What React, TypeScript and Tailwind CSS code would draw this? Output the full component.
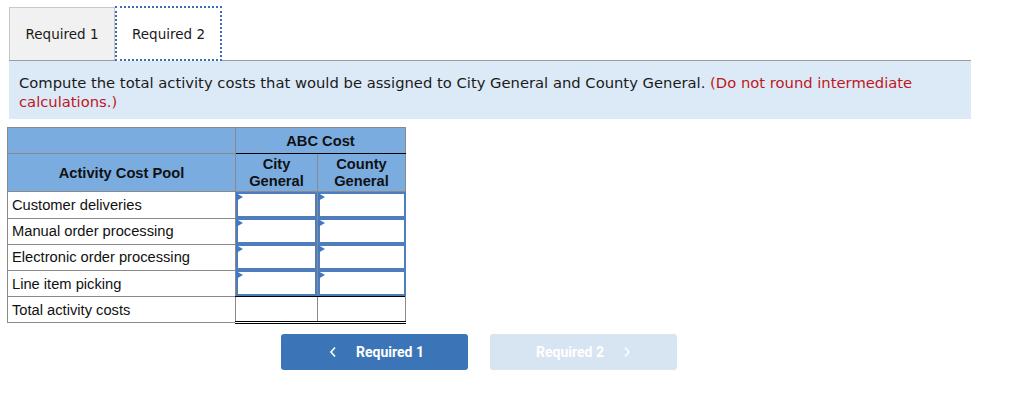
import React from "react";

const rows = [
  "Customer deliveries",
  "Manual order processing",
  "Electronic order processing",
  "Line item picking",
];

function InputCell() {
  return (
    <td className="p-0 border-l border-[#8a8a8a] h-[26px]">
      <div className="relative h-[26px] border-2 border-[#4d7dbd] bg-white">
        <div className="absolute left-[-2px] top-[-1px] w-0 h-0 border-t-[4px] border-b-[4px] border-l-[7px] border-t-transparent border-b-transparent border-l-[#3f78c4]" />
      </div>
    </td>
  );
}

export default function App() {
  return (
    <div className="w-[1024px] h-[407px] bg-white relative" style={{ fontFamily: "'DejaVu Sans', Verdana, sans-serif" }}>
      <div className="pt-[6px] pl-[9px] flex items-end">
        <div className="w-[106px] h-[53px] bg-[#f1f1f1] border border-[#c8c8c8] border-b-0 flex items-center justify-center text-[13.5px] text-[#1a1a1a] pt-[1px]">
          Required 1
        </div>
        <div className="w-[107px] h-[55px] bg-white border-2 border-dotted border-[#3a6fb8] flex items-center justify-center text-[13.5px] text-[#1a1a1a] -mb-[1px] relative z-10 pt-[1px]">
          Required 2
        </div>
      </div>
      <div className="ml-[9px] w-[962px] border-t border-[#9b9b9b] bg-[#dceaf7] h-[59px] pl-[10px] pr-[40px] pt-[12px] text-[14.75px] leading-[19px] text-[#1a1a1a]">
        Compute the total activity costs that would be assigned to City General and County General.{" "}
        <span className="text-[#c0161c]">(Do not round intermediate calculations.)</span>
      </div>
      <div className="ml-[7px] mt-[8px]" style={{ fontFamily: "'Liberation Sans', Arial, sans-serif" }}>
        <table className="border-collapse text-[14.7px] text-[#111]">
          <colgroup>
            <col className="w-[228px]" />
            <col className="w-[82px]" />
            <col className="w-[88px]" />
          </colgroup>
          <thead>
            <tr className="bg-[#7aace0] h-[26px]">
              <th className="border border-[#8a8a8a] border-b-0"></th>
              <th colSpan={2} className="border border-[#8a8a8a] border-b-black font-bold text-center pt-[2px]">
                ABC Cost
              </th>
            </tr>
            <tr className="bg-[#7aace0] h-[38px]">
              <th className="border border-[#8a8a8a] border-t-[#8a8a8a] font-bold text-center align-middle pt-[2px]">
                Activity Cost Pool
              </th>
              <th className="border border-[#8a8a8a] border-t-black font-bold leading-[17px] text-center pt-[1px]">
                City
                <br />
                General
              </th>
              <th className="border border-[#8a8a8a] border-t-black font-bold leading-[17px] text-center pt-[1px]">
                County
                <br />
                General
              </th>
            </tr>
          </thead>
          <tbody>
            {rows.map((r) => (
              <tr key={r} className="h-[26px]">
                <td className="border border-[#8a8a8a] px-[4px] py-0 pt-[1px]">{r}</td>
                <InputCell />
                <InputCell />
              </tr>
            ))}
            <tr className="h-[26px]">
              <td className="border border-[#8a8a8a] px-[4px] py-0 pt-[1px]">Total activity costs</td>
              <td className="p-0 border-l border-[#8a8a8a] border-t border-t-black border-b-[3px] border-b-black border-double"></td>
              <td className="p-0 border-l border-[#8a8a8a] border-t border-t-black border-b-[3px] border-b-black border-double border-r border-r-[#8a8a8a]"></td>
            </tr>
          </tbody>
        </table>
      </div>
      <div className="flex ml-[281px] mt-[10px] gap-[22px]" style={{ fontFamily: "Roboto, 'Liberation Sans', sans-serif" }}>
        <div className="w-[187px] h-[36px] bg-[#3b75b8] rounded-[3px] flex items-center justify-center gap-[19px] text-white text-[14px] font-bold">
          <svg width="8" height="12" viewBox="0 0 8 12" className="ml-[4px]">
            <path d="M6 1.5 L2 6 L6 10.5" stroke="white" strokeWidth="1.6" fill="none" />
          </svg>
          <span>Required 1</span>
        </div>
        <div className="w-[187px] h-[36px] bg-[#d7e4f1] rounded-[3px] flex items-center justify-center gap-[19px] text-white text-[14px] font-bold">
          <span className="ml-[0px]">Required 2</span>
          <svg width="8" height="12" viewBox="0 0 8 12">
            <path d="M2 1.5 L6 6 L2 10.5" stroke="white" strokeWidth="1.6" fill="none" />
          </svg>
        </div>
      </div>
    </div>
  );
}
